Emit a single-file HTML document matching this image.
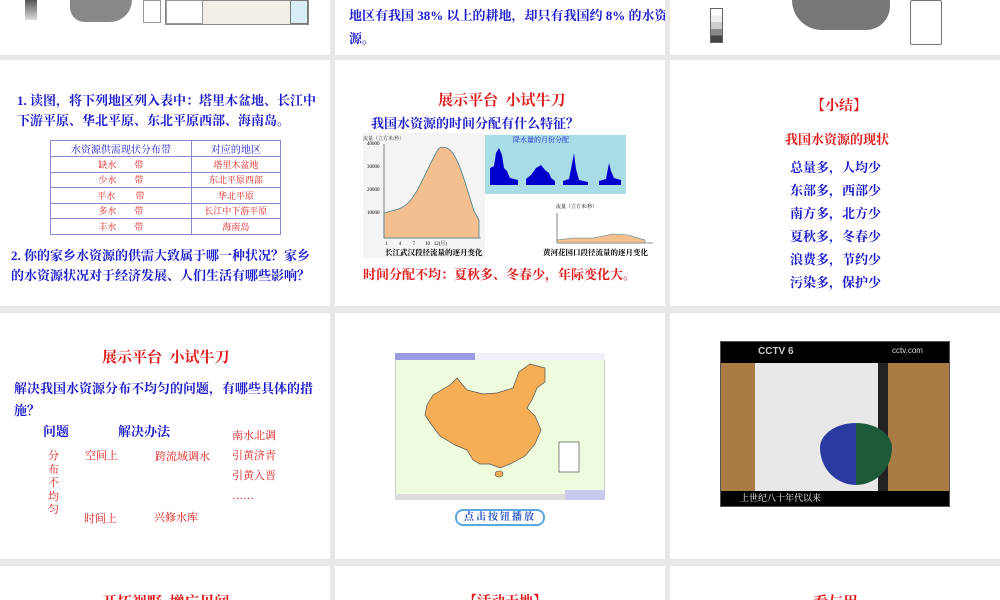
<!DOCTYPE html>
<html><head><meta charset="utf-8"><style>
*{margin:0;padding:0;box-sizing:border-box}
body{width:1000px;height:600px;background:#e8e8e8;position:relative;overflow:hidden;font-family:"Liberation Serif","Noto Serif CJK SC","Noto Sans CJK SC",serif;}
.s{position:absolute;background:#fff;overflow:hidden}
.a{position:absolute;white-space:nowrap}
.b{color:#1a1acc;font-weight:bold}
.r{color:#e01818;font-weight:bold}
table{border-collapse:collapse;position:absolute;left:50px;top:140px;width:231px;font-size:9px}
td{border:1px solid #8888cc;height:15.5px;text-align:center;color:#e01818}
tr:first-child td{color:#1a1acc;font-size:10px}
</style></head><body>
<div class="s" style="left:0;top:0;width:330px;height:55px">
 <div class="a" style="left:25px;top:0;width:12px;height:20px;background:linear-gradient(#555,#999,#ddd)"></div>
 <div class="a" style="left:70px;top:0;width:62px;height:22px;background:#888;border-radius:0 0 30px 20px"></div>
 <div class="a" style="left:143px;top:0;width:18px;height:23px;border:1px solid #999"></div>
 <div class="a" style="left:165px;top:0;width:144px;height:25px;background:#f3eee8;border:1px solid #888"></div>
 <div class="a" style="left:166px;top:0;width:37px;height:24px;background:#fff;border:1px solid #999"></div>
 <div class="a" style="left:290px;top:0;width:18px;height:24px;background:#d8eef5;border:1px solid #777"></div>
</div>
<div class="s" style="left:335px;top:0;width:330px;height:55px">
 <div class="a b" style="left:14px;top:5px;font-size:13px">地区有我国 38% 以上的耕地，却只有我国约 8% 的水资</div>
 <div class="a b" style="left:14px;top:28px;font-size:13px">源。</div>
</div>
<div class="s" style="left:670px;top:0;width:330px;height:55px">
 <div class="a" style="left:40px;top:8px;width:13px;height:35px;background:linear-gradient(#fff 0 20%,#eee 20% 40%,#ccc 40% 60%,#888 60% 80%,#444 80%);border:1px solid #666"></div>
 <div class="a" style="left:122px;top:0;width:98px;height:30px;background:#777;border-radius:0 0 40px 50px"></div>
 <div class="a" style="left:240px;top:0;width:32px;height:45px;border:1px solid #777;border-radius:2px"></div>
</div>
<div class="s" style="left:0;top:60px;width:330px;height:246px">
 <div class="a b" style="left:17px;top:31px;font-size:13px;line-height:20px">1. 读图，将下列地区列入表中：塔里木盆地、长江中<br>下游平原、华北平原、东北平原西部、海南岛。</div>
 <table style="top:80px"><tr><td>水资源供需现状分布带</td><td>对应的地区</td></tr>
 <tr><td>缺水&nbsp;&nbsp;&nbsp;&nbsp;&nbsp;&nbsp;&nbsp;&nbsp;带</td><td>塔里木盆地</td></tr>
 <tr><td>少水&nbsp;&nbsp;&nbsp;&nbsp;&nbsp;&nbsp;&nbsp;&nbsp;带</td><td>东北平原西部</td></tr>
 <tr><td>平水&nbsp;&nbsp;&nbsp;&nbsp;&nbsp;&nbsp;&nbsp;&nbsp;&nbsp;带</td><td>华北平原</td></tr>
 <tr><td>多水&nbsp;&nbsp;&nbsp;&nbsp;&nbsp;&nbsp;&nbsp;&nbsp;带</td><td>长江中下游平原</td></tr>
 <tr><td>丰水&nbsp;&nbsp;&nbsp;&nbsp;&nbsp;&nbsp;&nbsp;&nbsp;带</td><td>海南岛</td></tr></table>
 <div class="a b" style="left:11px;top:186px;font-size:13px;line-height:20px">2. 你的家乡水资源的供需大致属于哪一种状况？家乡<br>的水资源状况对于经济发展、人们生活有哪些影响？</div>
</div>
<div class="s" style="left:335px;top:60px;width:330px;height:246px">
 <div class="a r" style="left:103px;top:29px;font-size:15px">展示平台&nbsp;&nbsp;小试牛刀</div>
 <div class="a b" style="left:36px;top:53px;font-size:13px">我国水资源的时间分配有什么特征？</div>
 <svg class="a" style="left:28px;top:73px" width="290" height="125" viewBox="0 0 290 125">
  <rect x="0" y="0" width="122" height="125" fill="#f4f4f4"/>
  <text x="0" y="7" font-size="5" fill="#333">流量（立方米/秒）</text>
  <line x1="21" y1="11" x2="21" y2="105" stroke="#333" stroke-width=".6"/>
  <line x1="21" y1="105" x2="118" y2="105" stroke="#333" stroke-width=".6"/>
  <text x="4" y="12" font-size="5">40000</text><text x="4" y="35" font-size="5">30000</text><text x="4" y="58" font-size="5">20000</text><text x="4" y="81" font-size="5">10000</text>
  <path d="M21 105 L21 80 C30 77 38 77 45 70 C55 60 62 40 73 20 C76 14 78 13 84 15 C95 20 102 50 111 78 L116 87 L116 105Z" fill="#f4bf8e" stroke="#4a7f8f" stroke-width=".8"/>
  <text x="22" y="112" font-size="5">1&#160;&#160;&#160;&#160;&#160;&#160;&#160;&#160;&#160;4&#160;&#160;&#160;&#160;&#160;&#160;&#160;&#160;&#160;7&#160;&#160;&#160;&#160;&#160;&#160;&#160;&#160;10&#160;&#160;&#160;12(月)</text>
  <text x="22" y="122" font-size="7.5" font-weight="bold">长江武汉段径流量的逐月变化</text>
  <rect x="122" y="2" width="141" height="59" fill="#a8dde8"/>
  <text x="150" y="9" font-size="7" fill="#1a1acc">降水量的月份分配</text>
  <g fill="#0000cc">
   <path d="M127 52 L127 35 L131 33 L133 20 L136 15 L139 22 L141 35 L144 38 L147 45 L155 47 L155 52Z"/>
   <path d="M163 52 L163 46 L168 42 L173 35 L178 32 L182 37 L186 40 L188 45 L192 48 L192 52Z"/>
   <path d="M200 52 L200 48 L206 46 L208 36 L211 20 L213 36 L216 47 L225 49 L225 52Z"/>
   <path d="M236 52 L236 48 L243 46 L246 30 L248 38 L251 45 L258 47 L258 52Z"/>
  </g>
  <text x="193" y="75" font-size="5">流量（立方米/秒）</text>
  <line x1="194" y1="80" x2="194" y2="110" stroke="#333" stroke-width=".6"/>
  <line x1="194" y1="110" x2="290" y2="110" stroke="#333" stroke-width=".6"/>
  <path d="M194 110 L194 107 L210 105 L230 105 L250 101 L265 102 L282 107 L282 110Z" fill="#f4bf8e" stroke="#4a7f8f" stroke-width=".6"/>
  <text x="180" y="122" font-size="7.5" font-weight="bold">黄河花园口段径流量的逐月变化</text>
 </svg>
 <div class="a r" style="left:28px;top:204px;font-size:13px">时间分配不均：夏秋多、冬春少，年际变化大。</div>
</div>
<div class="s" style="left:670px;top:60px;width:330px;height:246px">
 <div class="a r" style="left:141px;top:35px;font-size:14px">【小结】</div>
 <div class="a r" style="left:115px;top:69px;font-size:13px">我国水资源的现状</div>
 <div class="a b" style="left:120px;top:96px;font-size:13px;line-height:23px">总量多，人均少<br>东部多，西部少<br>南方多，北方少<br>夏秋多，冬春少<br>浪费多，节约少<br>污染多，保护少</div>
</div>
<div class="s" style="left:0;top:313px;width:330px;height:246px">
 <div class="a r" style="left:102px;top:33px;font-size:15px">展示平台&nbsp;&nbsp;小试牛刀</div>
 <div class="a b" style="left:14px;top:65px;font-size:13px;line-height:22px">解决我国水资源分布不均匀的问题，有哪些具体的措<br>施？</div>
 <div class="a b" style="left:43px;top:108px;font-size:13px">问题</div>
 <div class="a b" style="left:118px;top:108px;font-size:13px">解决办法</div>
 <div class="a r" style="left:48px;top:137px;font-size:11px;line-height:13.5px;font-weight:normal">分<br>布<br>不<br>均<br>匀</div>
 <div class="a r" style="left:85px;top:134px;font-size:11px;font-weight:normal">空间上</div>
 <div class="a r" style="left:155px;top:135px;font-size:11px;font-weight:normal">跨流域调水</div>
 <div class="a r" style="left:84px;top:197px;font-size:11px;font-weight:normal">时间上</div>
 <div class="a r" style="left:154px;top:196px;font-size:11px;font-weight:normal">兴修水库</div>
 <div class="a r" style="left:232px;top:113px;font-size:11px;line-height:20px;font-weight:normal">南水北调<br>引黄济青<br>引黄入晋<br>……</div>
</div>
<div class="s" style="left:335px;top:313px;width:330px;height:246px">
 <div class="a" style="left:60px;top:40px;width:210px;height:146px;background:#eefbdc;border:1px solid #ccc"></div>
 <div class="a" style="left:60px;top:40px;width:210px;height:7px;background:#f0f0f8"></div>
 <div class="a" style="left:60px;top:40px;width:80px;height:7px;background:#9a9ae0"></div>
 <div class="a" style="left:60px;top:181px;width:210px;height:6px;background:#ddd"></div>
 <div class="a" style="left:230px;top:177px;width:40px;height:10px;background:#c9c9f0"></div>
 <svg class="a" style="left:60px;top:47px" width="210" height="135" viewBox="0 0 210 135">
  <path d="M32 45 L38 35 L55 25 L62 18 L72 30 L88 34 L102 33 L118 28 L124 12 L135 4 L150 8 L150 22 L142 28 L137 40 L132 48 L140 56 L146 70 L140 84 L130 96 L115 104 L105 108 L95 104 L85 104 L78 100 L72 90 L60 85 L45 76 L36 64 L30 55Z" fill="#f5ae55" stroke="#555" stroke-width=".7"/>
  <ellipse cx="104" cy="114" rx="4" ry="3" fill="#f5ae55" stroke="#555" stroke-width=".6"/>
  <rect x="164" y="82" width="20" height="30" fill="#fff" stroke="#555" stroke-width=".7"/>
 </svg>
 <div class="a" style="left:120px;top:196px;width:90px;height:17px;border:2px solid #5aa8e0;border-radius:8px;text-align:center;font-size:10px;font-weight:bold;color:#2050c0;line-height:13px;letter-spacing:2px">点击按钮播放</div>
</div>
<div class="s" style="left:670px;top:313px;width:330px;height:246px">
 <div class="a" style="left:50px;top:28px;width:230px;height:166px;background:#000;border:1px solid #555"></div>
 <div class="a" style="left:51px;top:50px;width:228px;height:128px;background:#a97b45"></div>
 <div class="a" style="left:85px;top:50px;width:125px;height:128px;background:#e8e8e8"></div>
 <div class="a" style="left:208px;top:50px;width:10px;height:128px;background:#222"></div>
 <div class="a" style="left:150px;top:110px;width:72px;height:62px;background:linear-gradient(90deg,#2a3aa0 50%,#1d5a3a 50%);border-radius:50% 50% 50% 50%/40% 40% 60% 60%"></div>
 <div class="a" style="left:88px;top:33px;color:#ccc;font-weight:bold;font-size:10px;font-family:'Liberation Sans',sans-serif">CCTV 6</div>
 <div class="a" style="left:222px;top:33px;color:#ddd;font-size:8px;font-family:'Liberation Sans',sans-serif">cctv.com</div>
 <div class="a" style="left:70px;top:178px;color:#fff;font-size:9px">上世纪八十年代以来</div>
</div>
<div class="s" style="left:0;top:566px;width:330px;height:34px"><div class="a r" style="left:102px;top:25px;font-size:15px">开拓视野&nbsp;&nbsp;增广见闻</div></div>
<div class="s" style="left:335px;top:566px;width:330px;height:34px"><div class="a r" style="left:128px;top:25px;font-size:14px">【活动天地】</div></div>
<div class="s" style="left:670px;top:566px;width:330px;height:34px"><div class="a r" style="left:143px;top:25px;font-size:15px">看与用</div></div>
</body></html>
